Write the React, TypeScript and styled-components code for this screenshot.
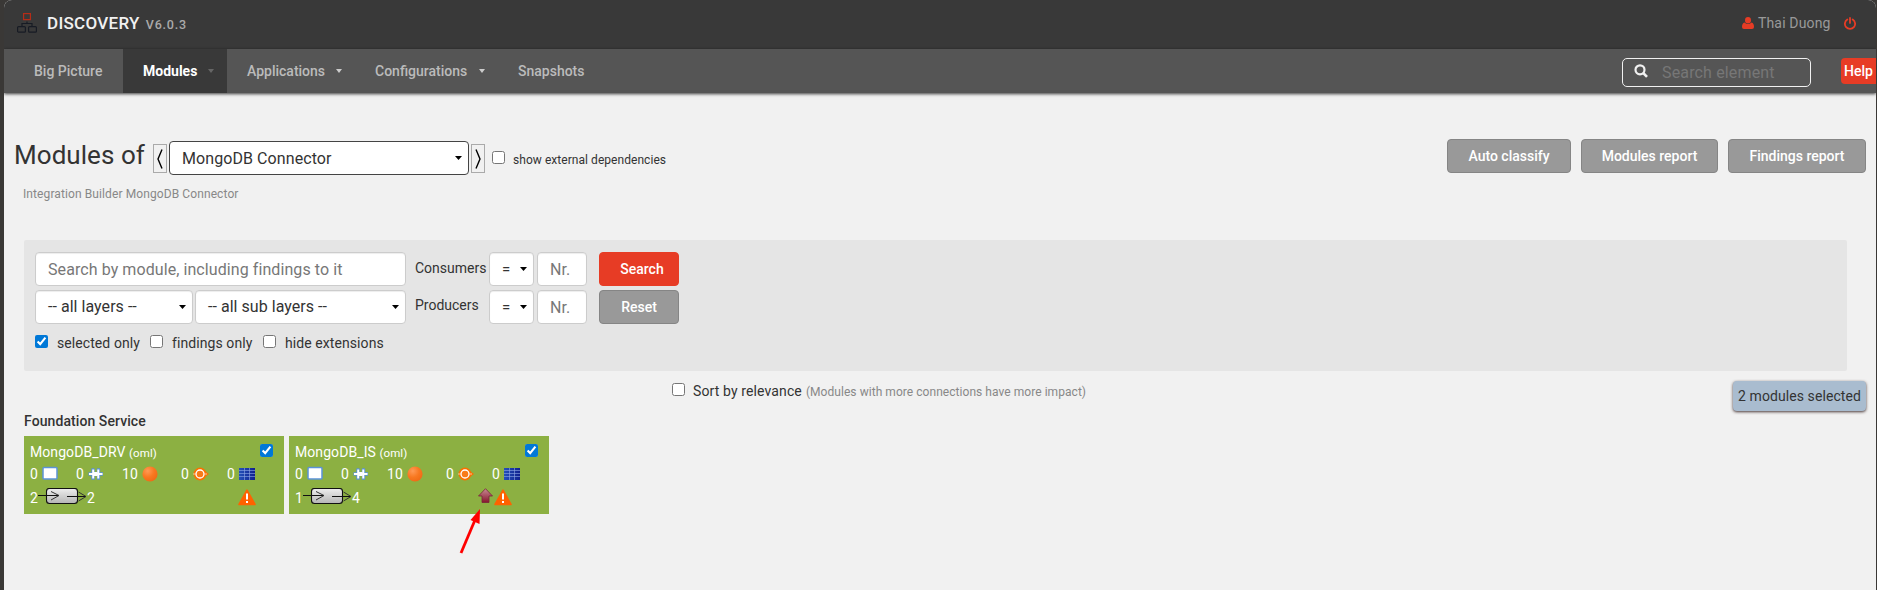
import React from "react";
import styled, { createGlobalStyle } from "styled-components";

const Global = createGlobalStyle`
  * { box-sizing: border-box; }
  body { margin: 0; background: #3a3836; font-family: Roboto, "Liberation Sans", sans-serif; font-size: 14px; letter-spacing: 0.08px; color: #333; }
  input { font-family: inherit; }
`;

const Frame = styled.div`
  height: 590px;
  margin: 0 1px 0 4px;
  background: #f1f1f1;
  border-radius: 8px 8px 0 0;
  overflow: hidden;
`;

const Header = styled.header`
  height: 49px;
  background: #393939;
  display: flex;
  align-items: center;
  padding: 0 20px 0 13px;
  line-height: 16px;
`;
const Brand = styled.span`
  margin: -3px 0 0 10px;
  font-size: 17px;
  font-weight: 500;
  letter-spacing: 0.3px;
  color: #f1f1f1;
  white-space: nowrap;
`;
const Version = styled.span`
  margin: 0 auto 0 6px;
  font-size: 12.5px;
  font-weight: 500;
  letter-spacing: 0.8px;
  color: #aaa;
`;
const User = styled.span`
  margin: -3px 14px 0 4px;
  width: 72px;
  color: #999;
  letter-spacing: 0.15px;
  white-space: nowrap;
`;

const Nav = styled.nav`
  position: relative;
  height: 44px;
  background: #555;
  display: flex;
  align-items: center;
  letter-spacing: 0;
  box-shadow: 0 1px 3px rgba(0, 0, 0, 0.75);
`;
const NavItem = styled.a<{ $w: number; $active?: boolean; $pad?: number }>`
  width: ${(p) => p.$w}px;
  height: 44px;
  padding: 0 13px 0 ${(p) => p.$pad ?? 20}px;
  display: flex;
  align-items: center;
  justify-content: space-between;
  background: ${(p) => (p.$active ? "#393939" : "transparent")};
  color: ${(p) => (p.$active ? "#fff" : "#bbb")};
  font-weight: ${(p) => (p.$active ? 700 : 500)};
  white-space: nowrap;
`;
const SearchBox = styled.div`
  width: 189px;
  height: 29px;
  margin: 2px 30px 0 auto;
  padding-left: 11px;
  border: 1px solid #f1f1f1;
  border-radius: 5px;
  display: flex;
  align-items: center;
  gap: 14px;
  input {
    width: 130px;
    padding: 2px 0 0;
    border: 0;
    background: transparent;
    font-size: 16px;
    letter-spacing: 0.15px;
    line-height: 20px;
    outline: 0;
  }
  input::placeholder { color: #777; }
`;
const Help = styled.a`
  width: 35px;
  height: 26px;
  padding-left: 3px;
  border-radius: 4px 0 0 4px;
  background: #e73c25;
  color: #fff;
  font-weight: 500;
  line-height: 26px;
`;

const TitleBar = styled.section`
  display: flex;
  align-items: flex-start;
  height: 84px;
  padding: 46px 10px 0 10px;
`;
const Title = styled.h1`
  width: 139px;
  margin: 0;
  padding-top: 1px;
  font-size: 26px;
  letter-spacing: 0.05px;
  line-height: 30px;
  font-weight: 400;
  white-space: nowrap;
`;
const Step = styled.button`
  width: 14px;
  height: 29px;
  margin: 5px 2px 0 0;
  padding: 0;
  border: 1px solid #aaa;
  background: #f1f1f1;
  display: flex;
  align-items: center;
  justify-content: center;
`;
const Field = styled.div<{ $w: number; $dark?: boolean; $size?: number }>`
  width: ${(p) => p.$w}px;
  height: 34px;
  padding: 0 6px 0 12px;
  background: #fff;
  border: 1px solid ${(p) => (p.$dark ? "#444" : "#ccc")};
  border-radius: 4px;
  box-shadow: ${(p) => (p.$dark ? "none" : "inset 0 1px 1px rgba(0,0,0,0.075)")};
  display: flex;
  align-items: center;
  justify-content: space-between;
  font-size: ${(p) => p.$size ?? 16}px;
  letter-spacing: ${(p) => (p.$dark ? "0.08px" : "0.04px")};
  line-height: ${(p) => (p.$dark ? 33 : 32)}px;
  white-space: nowrap;
  flex: none;
`;
const TitleField = styled.div`
  margin: 2px 2px 0 0;
`;
const TextInput = styled.input<{ $w: number }>`
  width: ${(p) => p.$w}px;
  height: 34px;
  padding: 0 12px;
  background: #fff;
  border: 1px solid #ccc;
  border-radius: 4px;
  box-shadow: inset 0 1px 1px rgba(0, 0, 0, 0.075);
  font-size: 16px;
  &::placeholder { color: #777; letter-spacing: 0.08px; }
`;
const Check = styled.input.attrs({ type: "checkbox" })`
  width: 13px;
  height: 13px;
  margin: 0;
  flex: none;
  accent-color: #0078d7;
`;
const External = styled.label`
  display: flex;
  margin: 12px auto 0 5px;
  font-size: 12px;
  line-height: 17px;
  letter-spacing: 0.05px;
  white-space: nowrap;
  span { margin: 1px 0 0 8px; }
`;
const Button = styled.button<{ $w: number; $primary?: boolean }>`
  width: ${(p) => p.$w}px;
  height: 34px;
  padding: 0 0 0 ${(p) => (p.$primary ? 6 : 0)}px;
  border: 1px solid ${(p) => (p.$primary ? "#e73c25" : "#858585")};
  border-radius: 4px;
  background: ${(p) => (p.$primary ? "#e73c25" : "#999")};
  color: #fff;
  font: 500 14px Roboto, sans-serif;
  white-space: nowrap;
`;
const Reports = styled.div`
  display: flex;
  gap: 10px;
`;
const Description = styled.p`
  margin: 9px 0 0 19px;
  height: 54px;
  font-size: 12px;
  line-height: 16px;
  letter-spacing: 0.1px;
  color: #888;
`;

const Filter = styled.section`
  width: 1823px;
  height: 131px;
  margin-left: 20px;
  padding: 12px 0 0 11px;
  background: #e5e5e5;
  border-radius: 2px;
`;
const FilterRow = styled.div`
  display: flex;
  height: 34px;
  margin-bottom: 4px;
`;
const FilterLabel = styled.span<{ $up: number }>`
  width: 74px;
  margin-left: 9px;
  padding-top: ${(p) => 8 - p.$up}px;
  line-height: 16px;
  letter-spacing: 0;
`;
const Numbers = styled.div`
  display: flex;
  gap: 3px;
  margin-right: 12px;
`;
const SubLayer = styled.div`
  margin-left: 2px;
`;
const Options = styled.div`
  display: flex;
  padding-top: 7px;
`;
const Option = styled.label<{ $w: number }>`
  width: ${(p) => p.$w}px;
  display: flex;
  line-height: 16px;
  white-space: nowrap;
  span { margin-left: 9px; }
`;

const SortBar = styled.section`
  display: flex;
  height: 42px;
  padding: 10px 10px 0 668px;
`;
const SortLabel = styled.label`
  display: flex;
  margin-top: 2px;
  line-height: 16px;
  white-space: nowrap;
  span { margin-left: 8px; letter-spacing: 0.12px; }
  small { margin-left: 4px; padding-top: 1px; font-size: 12px; letter-spacing: 0.05px; color: #888; }
`;
const Selected = styled.div`
  width: 133px;
  height: 30px;
  margin-left: auto;
  border-radius: 4px;
  background: #a9bccf;
  box-shadow: 0 1px 3px rgba(40, 20, 20, 0.85);
  text-align: center;
  line-height: 30px;
  white-space: nowrap;
`;

const Group = styled.h2`
  margin: 0 0 7px 20px;
  height: 16px;
  font-size: 14px;
  line-height: 16px;
  font-weight: 500;
  letter-spacing: 0.08px;
`;
const Cards = styled.div`
  display: flex;
  gap: 5px;
  padding-left: 20px;
`;
const Card = styled.article`
  position: relative;
  width: 260px;
  height: 78px;
  padding: 8px 11px 0 6px;
  background: #8cb042;
  color: #fff;
`;
const CardHead = styled.div`
  display: flex;
  justify-content: space-between;
  height: 22px;
  line-height: 16px;
  small { font-size: 11.5px; }
`;
const Stats = styled.div`
  display: flex;
  height: 22px;
  line-height: 17px;
`;
const Stat = styled.span<{ $w: number }>`
  width: ${(p) => p.$w}px;
  display: flex;
  align-items: flex-start;
  gap: 4px;
  svg { flex: none; }
`;
const Flow = styled.div`
  display: flex;
  line-height: 21px;
  height: 20px;
`;
const Marks = styled.span<{ $right: number }>`
  display: flex;
  margin: 0 ${(p) => p.$right}px 0 auto;
`;
const Pointer = styled.svg`
  position: absolute;
  left: 168px;
  top: 70px;
`;
const Lifted = styled.svg`
  margin-top: -3px;
  flex: none;
`;
const Lowered = styled.svg`
  margin-top: 1px;
`;

const Caret = ({ w = 7, color = "#000" }: { w?: number; color?: string }) => (
  <svg width={w} height="4" viewBox="0 0 8 4" preserveAspectRatio="none"><path d="M0 0h8L4 4z" fill={color} /></svg>
);
const Chevron = ({ right }: { right?: boolean }) => (
  <svg width="6" height="20" viewBox="0 0 6 20" fill="none" stroke="#000" strokeWidth="1.4">
    <path d={right ? "M1 .5 5 10 1 19.5" : "M5 .5 1 10 5 19.5"} />
  </svg>
);
const Logo = () => (
  <Lifted width="20" height="20" viewBox="0 0 20 20" fill="none" stroke="#171b24" strokeWidth="1.2">
    <rect x="6.6" y=".6" width="6.8" height="6" stroke="#b52c17" />
    <path d="M10 8.500v2M5 13V10.500h10V13" />
    <rect x=".6" y="13.600" width="7.800" height="5.600" rx="1" /><rect x="11.600" y="13.600" width="7.800" height="5.600" rx="1" />
  </Lifted>
);
const UserIcon = () => (
  <Lifted width="12" height="12" viewBox="0 0 12 12" fill="#e73c25">
    <ellipse cx="6" cy="3.200" rx="3" ry="3.200" /><path d="M2.500 5.500Q6 8.500 9.500 5.500 12 6.200 12 10 12 12 10 12H2Q0 12 0 10 0 6.200 2.500 5.500z" />
  </Lifted>
);
const Power = () => (
  <Lifted width="12" height="13" viewBox="0 0 12 13" fill="none" stroke="#e73c25" strokeWidth="1.800" strokeLinecap="round">
    <path d="M6 .9v5M3.300 2.500a5.100 5.100 0 1 0 5.400 0" />
  </Lifted>
);
const Lens = () => (
  <Lifted width="14" height="14" viewBox="0 0 14 14" fill="none" stroke="#f1f1f1" strokeWidth="2.200">
    <circle cx="6" cy="5.800" r="4.500" /><path d="m9.200 9 3.800 3.800" strokeWidth="2.600" />
  </Lifted>
);
const WindowIcon = () => (
  <svg width="16" height="14" viewBox="0 0 16 14"><rect x="1" y="1.500" width="14" height="11.500" rx="1" fill="#fff" stroke="#5b93d8" strokeWidth="1.500" /></svg>
);
const Connector = () => (
  <Lowered width="16" height="14" viewBox="0 0 16 14">
    <path d="M.5 7H15M5 2v10M10.500 2v10M3.500 3h3M9 3h3M3.500 11h3M9 11h3" stroke="#5b93d8" strokeWidth="3.400" />
    <path d="M1 7H14.500M5.200 2.500v9M10.300 2.500v9" stroke="#fff" strokeWidth="2" />
    <path d="M7.700 5v4" stroke="#fff" strokeWidth="4" />
  </Lowered>
);
const Ball = () => (
  <svg width="16" height="16" viewBox="0 0 16 16">
    <defs><radialGradient id="ball" cx=".35" cy=".3" r=".7"><stop offset="0" stopColor="#ff9a55" /><stop offset=".6" stopColor="#f87820" /><stop offset="1" stopColor="#f06c17" /></radialGradient></defs>
    <circle cx="8" cy="8" r="7.600" fill="url(#ball)" />
  </svg>
);
const Ring = () => (
  <Lowered width="16" height="14" viewBox="0 0 16 14">
    <path d="M11 3.500 16 7 11 10.500z" fill="#fa7100" /><circle cx="7" cy="7" r="6.500" fill="#fa7100" />
    <circle cx="7" cy="7" r="4" fill="#f87a18" stroke="#fff" strokeWidth="1.300" /><path d="M11 7h3M0 7h3" stroke="#ffd9b8" strokeWidth=".8" />
  </Lowered>
);
const Grid = () => (
  <svg width="16" height="14" viewBox="0 -2 16 14">
    <defs><linearGradient id="grid"><stop stopColor="#2450b8" /><stop offset="1" stopColor="#10208f" /></linearGradient></defs>
    <path d="M0 0h16v12H0z" fill="url(#grid)" /><path d="M0 2.500h16M0 5.500h16M0 8.500h16M5.500 0v12M10.500 0v12" stroke="#91a9e6" strokeWidth=".6" />
  </svg>
);
const Pipe = () => (
  <svg width="49" height="17" viewBox="0 0 49 17" fill="none" stroke="#111" strokeWidth="1">
    <defs><linearGradient id="pipe" x2="0" y2="1"><stop stopColor="#eee" /><stop offset="1" stopColor="#b5b5b5" /></linearGradient></defs>
    <rect x="8.500" y=".5" width="31" height="15" rx="3" fill="url(#pipe)" strokeWidth="1.100" />
    <path d="M0 7.500H21M29 8.500H48" /><path d="m13 3.500 8 4-8 4.500M40.500 4 48 8.500 40.500 13" stroke="#333" />
  </svg>
);
const Warning = () => (
  <Lowered width="18" height="17" viewBox="0 0 18 17">
    <path d="M9 1.200 17 15.500H1z" fill="#ff6200" stroke="#ff6200" strokeWidth="1.600" strokeLinejoin="round" />
    <path d="M9 4.500v6M9 12v2" stroke="#fff" strokeWidth="2" />
  </Lowered>
);
const UpArrow = () => (
  <svg width="16" height="16" viewBox="0 0 16 16">
    <defs><linearGradient id="up" x2="0" y2="1"><stop stopColor="#c98b94" /><stop offset="1" stopColor="#86152c" /></linearGradient></defs>
    <path d="M7.500.7 14.500 8H11v6.500H4V8H.5z" fill="url(#up)" stroke="#78253a" strokeWidth=".8" />
  </svg>
);

function ModuleCard({ name, consumers, producers, raised }: { name: string; consumers: number; producers: number; raised?: boolean }) {
  return (
    <Card>
      <CardHead><span>{name} <small>(oml)</small></span><Check defaultChecked /></CardHead>
      <Stats>
        <Stat $w={46}>0<WindowIcon /></Stat>
        <Stat $w={46}>0<Connector /></Stat>
        <Stat $w={59}>10<Ball /></Stat>
        <Stat $w={46}>0<Ring /></Stat>
        <Stat $w={30}>0<Grid /></Stat>
      </Stats>
      <Flow>
        {consumers}<Pipe />{producers}
        <Marks $right={raised ? 26 : 17}>{raised && <UpArrow />}<Warning /></Marks>
      </Flow>
      {raised && (
        <Pointer width="26" height="50" viewBox="0 0 26 50">
          <path d="M4 47 18 14" stroke="#f00" strokeWidth="2.800" /><path d="M23 3 22.500 18 13.500 14z" fill="#f00" />
        </Pointer>
      )}
    </Card>
  );
}

export default function App() {
  return (
    <>
      <Global />
      <Frame>
        <Header>
          <Logo /><Brand>DISCOVERY</Brand><Version>V6.0.3</Version>
          <UserIcon /><User>Thai Duong</User><Power />
        </Header>
        <Nav>
          <NavItem $w={119} $pad={30}>Big Picture</NavItem>
          <NavItem $w={104} $active>Modules<Caret w={6} color="#666" /></NavItem>
          <NavItem $w={128}>Applications<Caret w={6} color="#ccc" /></NavItem>
          <NavItem $w={143}>Configurations<Caret w={6} color="#ccc" /></NavItem>
          <NavItem $w={110}>Snapshots</NavItem>
          <SearchBox><Lens /><input placeholder="Search element" /></SearchBox>
          <Help>Help</Help>
        </Nav>
        <TitleBar>
          <Title>Modules of</Title>
          <Step><Chevron /></Step>
          <TitleField><Field $w={300} $dark>MongoDB Connector<Caret /></Field></TitleField>
          <Step><Chevron right /></Step>
          <External><Check /><span>show external dependencies</span></External>
          <Reports>
            <Button $w={124}>Auto classify</Button>
            <Button $w={137}>Modules report</Button>
            <Button $w={138}>Findings report</Button>
          </Reports>
        </TitleBar>
        <Description>Integration Builder MongoDB Connector</Description>
        <Filter>
          <FilterRow>
            <TextInput $w={371} placeholder="Search by module, including findings to it" />
            <FilterLabel $up={0}>Consumers</FilterLabel>
            <Numbers><Field $w={45} $size={15}>=<Caret /></Field><TextInput $w={50} placeholder="Nr." /></Numbers>
            <Button $w={80} $primary>Search</Button>
          </FilterRow>
          <FilterRow>
            <Field $w={158}>-- all layers --<Caret /></Field>
            <SubLayer><Field $w={211}>-- all sub layers --<Caret /></Field></SubLayer>
            <FilterLabel $up={1}>Producers</FilterLabel>
            <Numbers><Field $w={45} $size={15}>=<Caret /></Field><TextInput $w={50} placeholder="Nr." /></Numbers>
            <Button $w={80}>Reset</Button>
          </FilterRow>
          <Options>
            <Option $w={115}><Check defaultChecked /><span>selected only</span></Option>
            <Option $w={113}><Check /><span>findings only</span></Option>
            <Option $w={130}><Check /><span>hide extensions</span></Option>
          </Options>
        </Filter>
        <SortBar>
          <SortLabel><Check /><span>Sort by relevance</span><small>(Modules with more connections have more impact)</small></SortLabel>
          <Selected>2 modules selected</Selected>
        </SortBar>
        <Group>Foundation Service</Group>
        <Cards>
          <ModuleCard name="MongoDB_DRV" consumers={2} producers={2} />
          <ModuleCard name="MongoDB_IS" consumers={1} producers={4} raised />
        </Cards>
      </Frame>
    </>
  );
}
